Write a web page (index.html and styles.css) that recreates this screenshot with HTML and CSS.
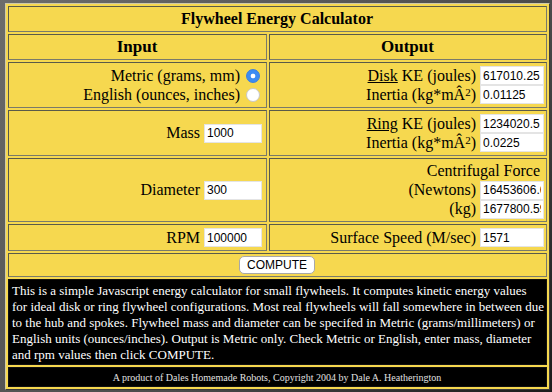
FILE: index.html
```html
<!DOCTYPE html>
<html>
<head>
<meta charset="utf-8">
<title>Flywheel Energy Calculator</title>
<link rel="stylesheet" href="styles.css">
</head>
<body>
<div class="calc">
  <div class="cell title">Flywheel Energy Calculator</div>
  <div class="cell head">Input</div>
  <div class="cell head">Output</div>

  <div class="cell in">
    <div class="line">Metric (grams, mm)<span class="radio on"></span></div>
    <div class="line">English (ounces, inches)<span class="radio"></span></div>
  </div>
  <div class="cell out">
    <div class="line"><span><u>Disk</u> KE (joules)</span><input class="field w" value="617010.25" readonly></div>
    <div class="line"><span>Inertia (kg*mÂ<span class="sup">2</span>)</span><input class="field w" value="0.01125" readonly></div>
  </div>

  <div class="cell in">
    <div class="line">Mass<input class="field s" value="1000"></div>
  </div>
  <div class="cell out">
    <div class="line"><span><u>Ring</u> KE (joules)</span><input class="field w" value="1234020.5" readonly></div>
    <div class="line"><span>Inertia (kg*mÂ<span class="sup">2</span>)</span><input class="field w" value="0.0225" readonly></div>
  </div>

  <div class="cell in">
    <div class="line">Diameter<input class="field s" value="300"></div>
  </div>
  <div class="cell out">
    <div class="line cf">Centrifugal Force</div>
    <div class="line"><span>(Newtons)</span><input class="field w" value="16453606.65" readonly></div>
    <div class="line"><span>(kg)</span><input class="field w" value="1677800.595" readonly></div>
  </div>

  <div class="cell in">
    <div class="line">RPM<input class="field s" value="100000"></div>
  </div>
  <div class="cell out">
    <div class="line"><span>Surface Speed (M/sec)</span><input class="field w" value="1571" readonly></div>
  </div>

  <div class="cell compute"><button class="btn" type="button">COMPUTE</button></div>

  <div class="cell desc">This is a simple Javascript energy calculator for small flywheels. It computes kinetic energy values<br>for ideal disk or ring flywheel configurations. Most real flywheels will fall somewhere in between due<br>to the hub and spokes. Flywheel mass and diameter can be specifed in Metric (grams/millimeters) or<br>English units (ounces/inches). Output is Metric only. Check Metric or English, enter mass, diameter<br>and rpm values then click COMPUTE.</div>

  <div class="cell foot">A product of Dales Homemade Robots, Copyright 2004 by Dale A. Heatherington</div>
</div>
</body>
</html>
```

FILE: styles.css
```css
html, body {
  margin: 0;
  height: 100%;
}
body {
  padding: 3px 0 0 5px;
  box-sizing: border-box;
  background: linear-gradient(135deg, #6c6c6c 0%, #4a4a4a 60%, #1a1a1a 100%);
  font-family: "Liberation Serif", "Times New Roman", serif;
  color: #000;
}
.calc {
  display: grid;
  grid-template-columns: 259px 278px;
  grid-template-rows: 26px 26px 46px 46px 64px 27px 24px 86px 20px;
  gap: 2px;
  padding: 2px;
  width: max-content;
  background: #f6d84f;
  border: 1px solid;
  border-color: #cfc9a8 #3a3a3a #3a3a3a #cfc9a8;
}
.cell {
  box-sizing: border-box;
  min-width: 0;
  border: 1px solid;
  border-color: #5a5a4a #7a7a6a #7a7a6a #5a5a4a;
  padding: 0 4px 0 3px;
  font-size: 16px;
}
.title, .head {
  display: flex;
  align-items: center;
  justify-content: center;
  font-weight: bold;
}
.title {
  grid-column: 1 / -1;
}
.head {
  font-size: 17px;
}
.in, .out {
  display: flex;
  flex-direction: column;
  justify-content: center;
}
.out {
  padding-right: 2px;
}
.line {
  display: flex;
  justify-content: flex-end;
  align-items: center;
  height: 19px;
  white-space: nowrap;
}
.line .field {
  margin-left: 4px;
}
.cf {
  padding-right: 4px;
}
.sup {
  font-size: 11px;
  position: relative;
  top: -4px;
}
.field {
  box-sizing: border-box;
  height: 19px;
  border: 1px solid #e4e4e4;
  background: #fff;
  font: 12px "Liberation Sans", Arial, sans-serif;
  color: #000;
  padding: 0 2px;
  outline: none;
}
.field.s { width: 58px; }
.field.w { width: 64px; }
.radio {
  display: inline-block;
  width: 14px;
  height: 14px;
  box-sizing: border-box;
  border-radius: 50%;
  margin: 0 2px 0 6px;
  background: #fff;
  border: 1px solid #c8c8c8;
}
.radio.on {
  border-color: #3a7ee0;
  background: radial-gradient(circle, #fff 0 2px, #3c8cf2 2.7px);
}
.compute {
  grid-column: 1 / -1;
  display: flex;
  align-items: center;
  justify-content: center;
}
.btn {
  height: 18px;
  padding: 0 7px;
  border: 1px solid #a8a8a8;
  border-radius: 5px;
  background: #fff;
  font: 12px "Liberation Sans", Arial, sans-serif;
  color: #000;
}
.desc {
  grid-column: 1 / -1;
  background: #000;
  border-color: #111;
  color: #fff;
  font-size: 13px;
  line-height: 16px;
  padding: 3px 2px 0 3px;
  white-space: nowrap;
  overflow: hidden;
}
.foot {
  grid-column: 1 / -1;
  display: flex;
  align-items: center;
  justify-content: center;
  background: #000;
  border-color: #111;
  color: #e0e0e0;
  font-size: 10px;
}
```
